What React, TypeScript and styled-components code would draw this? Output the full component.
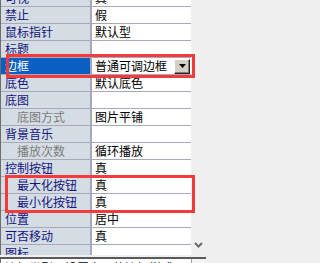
import { createGlobalStyle, styled } from 'styled-components'

const GlobalStyle = createGlobalStyle`
  html, body {
    margin: 0;
    padding: 0;
    overflow: hidden;
    background: #f0f0f0;
  }
  body {
    font-family: "Noto Sans CJK SC", "Noto Sans", sans-serif;
  }
`

const Frame = styled.div`
  position: relative;
  width: 206px;
  height: 263px;
  display: flex;
  flex-direction: column;
  background: #f0f0f0;
  overflow: hidden;
`

const GridArea = styled.div`
  display: flex;
  height: 255px;
  flex-shrink: 0;
`

const Viewport = styled.div`
  width: 191px;
  height: 100%;
  overflow: hidden;
  border-left: 1px solid #6e6e6e;
  box-sizing: border-box;
  background: #ffffff;
`

const List = styled.div`
  margin-top: -10px;
`

const Row = styled.div`
  display: flex;
  height: 17px;
  box-sizing: border-box;
  border-bottom: 1px solid #a7a9ba;
`

const LabelCell = styled.div<{ $selected?: boolean; $child?: boolean; $dim?: boolean }>`
  width: 91px;
  flex-shrink: 0;
  box-sizing: border-box;
  border-right: 2px solid #a7a9ba;
  background: ${(p) => (p.$selected ? '#0a5fc2' : '#d4dde4')};
  color: ${(p) => (p.$selected ? '#ffffff' : p.$dim ? '#7c7c7c' : '#14147e')};
  padding-left: ${(p) => (p.$child ? '16px' : '4px')};
  font-size: 12px;
  line-height: 16px;
  white-space: nowrap;
  overflow: hidden;
`

const ValueCell = styled.div`
  flex: 1;
  display: flex;
  align-items: center;
  padding-left: 3px;
  padding-right: 1px;
  color: #000000;
  font-size: 12px;
  line-height: 16px;
  white-space: nowrap;
  overflow: hidden;
`

const ValueText = styled.span`
  flex: 1;
`

const DropButton = styled.div`
  width: 16px;
  height: 15px;
  box-sizing: border-box;
  display: flex;
  align-items: center;
  justify-content: center;
  background: #d4d0c8;
  border-top: 1px solid #ffffff;
  border-left: 1px solid #ffffff;
  border-right: 1px solid #202020;
  border-bottom: 1px solid #202020;
  box-shadow: inset -1px -1px 0 #808080;
`

const ScrollTrack = styled.div`
  flex: 1;
  display: flex;
  flex-direction: column;
  justify-content: flex-end;
  align-items: center;
  padding-bottom: 7px;
  background: #f0f0f0;
`

const DescRow = styled.div`
  display: flex;
  flex: 1;
  margin-top: 2px;
  border-top: 2px solid #5a5a5a;
`

const DescBox = styled.div`
  width: 191px;
  box-sizing: border-box;
  border-left: 1px solid #6e6e6e;
  background: #ffffff;
  padding-left: 4px;
  padding-top: 1px;
  font-size: 12px;
  line-height: 16px;
  color: #000000;
  white-space: nowrap;
  overflow: hidden;
`

const DescSide = styled.div`
  flex: 1;
  border-left: 1px solid #a0a0a0;
  background: #f4f4f4;
`

const Highlight = styled.div<{ $top: number; $left: number; $width: number; $height: number }>`
  position: absolute;
  top: ${(p) => p.$top}px;
  left: ${(p) => p.$left}px;
  width: ${(p) => p.$width}px;
  height: ${(p) => p.$height}px;
  box-sizing: border-box;
  border: 3px solid #f43a3a;
  pointer-events: none;
`

interface Prop {
  label: string
  value: string
  child?: boolean
  dim?: boolean
  selected?: boolean
  dropdown?: boolean
}

const props: Prop[] = [
  { label: '可视', value: '真' },
  { label: '禁止', value: '假' },
  { label: '鼠标指针', value: '默认型' },
  { label: '标题', value: '' },
  { label: '边框', value: '普通可调边框', selected: true, dropdown: true },
  { label: '底色', value: '默认底色' },
  { label: '底图', value: '' },
  { label: '底图方式', value: '图片平铺', child: true, dim: true },
  { label: '背景音乐', value: '' },
  { label: '播放次数', value: '循环播放', child: true, dim: true },
  { label: '控制按钮', value: '真' },
  { label: '最大化按钮', value: '真', child: true },
  { label: '最小化按钮', value: '真', child: true },
  { label: '位置', value: '居中' },
  { label: '可否移动', value: '真' },
  { label: '图标', value: '' },
]

export default function App() {
  return (
    <>
      <GlobalStyle />
      <Frame>
        <GridArea>
          <Viewport>
            <List>
              {props.map((p) => (
                <Row key={p.label}>
                  <LabelCell $selected={p.selected} $child={p.child} $dim={p.dim}>
                    {p.label}
                  </LabelCell>
                  <ValueCell>
                    <ValueText>{p.value}</ValueText>
                    {p.dropdown && (
                      <DropButton>
                        <svg width="7" height="4" viewBox="0 0 7 4">
                          <polygon points="0,0 7,0 3.5,4" fill="#000" />
                        </svg>
                      </DropButton>
                    )}
                  </ValueCell>
                </Row>
              ))}
            </List>
          </Viewport>
          <ScrollTrack>
            <svg width="9" height="6" viewBox="0 0 9 6">
              <polyline points="1,1 4.5,4.5 8,1" fill="none" stroke="#6a6a6a" strokeWidth="2" />
            </svg>
          </ScrollTrack>
        </GridArea>
        <DescRow>
          <DescBox>边框类型：设置窗口的边框样式。</DescBox>
          <DescSide />
        </DescRow>
        <Highlight $top={54} $left={6} $width={189} $height={24} />
        <Highlight $top={175} $left={5} $width={190} $height={38} />
      </Frame>
    </>
  )
}
